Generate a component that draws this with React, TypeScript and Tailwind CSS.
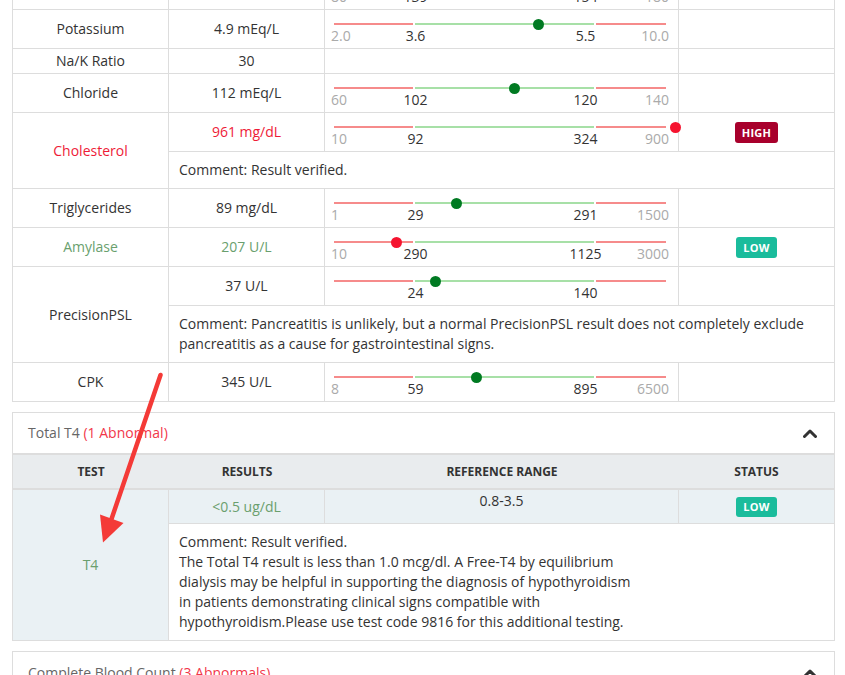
import React from "react";

type Scale = { min?: string; low: string; high: string; max?: string; dot?: number; red?: boolean };
type Row = {
  name: string;
  value: string;
  tone?: "red" | "green";
  scale?: Scale;
  status?: "HIGH" | "LOW";
  comment?: string[];
  short?: boolean;
};

const rows: Row[] = [
  { name: "Sodium", value: "146 mEq/L", scale: { min: "80", low: "139", high: "154", max: "180" } },
  { name: "Potassium", value: "4.9 mEq/L", scale: { min: "2.0", low: "3.6", high: "5.5", max: "10.0", dot: 208 } },
  { name: "Na/K Ratio", value: "30", short: true },
  { name: "Chloride", value: "112 mEq/L", scale: { min: "60", low: "102", high: "120", max: "140", dot: 184 } },
  {
    name: "Cholesterol",
    value: "961 mg/dL",
    tone: "red",
    scale: { min: "10", low: "92", high: "324", max: "900", dot: 345, red: true },
    status: "HIGH",
    comment: ["Comment: Result verified."],
  },
  { name: "Triglycerides", value: "89 mg/dL", scale: { min: "1", low: "29", high: "291", max: "1500", dot: 126 } },
  {
    name: "Amylase",
    value: "207 U/L",
    tone: "green",
    scale: { min: "10", low: "290", high: "1125", max: "3000", dot: 65.5, red: true },
    status: "LOW",
  },
  {
    name: "PrecisionPSL",
    value: "37 U/L",
    scale: { low: "24", high: "140", dot: 104.5 },
    comment: [
      "Comment: Pancreatitis is unlikely, but a normal PrecisionPSL result does not completely exclude",
      "pancreatitis as a cause for gastrointestinal signs.",
    ],
  },
  { name: "CPK", value: "345 U/L", scale: { min: "8", low: "59", high: "895", max: "6500", dot: 146 } },
];

const cell = "bg-white flex items-center justify-center text-center";

function Badge({ kind }: { kind: "HIGH" | "LOW" }) {
  return (
    <span
      className={`inline-flex h-[21px] items-center rounded-[3px] px-[7px] text-[11px] font-bold leading-none tracking-[0.3px] text-white ${
        kind === "HIGH" ? "bg-[#a8002c]" : "bg-[#1abc9c]"
      }`}
    >
      {kind}
    </span>
  );
}

function ScaleBar({ s }: { s: Scale }) {
  return (
    <div className="relative h-[38px] bg-white pl-[9px] pt-[13px]">
      <div className="flex gap-[2px]">
        <div className="h-[2px] w-[79px] bg-[#f68b8b]" />
        <div className="h-[2px] w-[179px] bg-[#a7e0a7]" />
        <div className="h-[2px] w-[70px] bg-[#f68b8b]" />
      </div>
      <div className="relative mt-[1px] h-[20px] whitespace-nowrap text-[14px] leading-[20px] text-[#333]">
        {s.min && <span className="absolute left-[-3px] top-0 text-[#aaaaaa]">{s.min}</span>}
        <span className="absolute left-[81.5px] top-0 -translate-x-1/2">{s.low}</span>
        <span className="absolute left-[251.5px] top-0 -translate-x-1/2">{s.high}</span>
        {s.max && <span className="absolute right-[9px] top-0 text-[#aaaaaa]">{s.max}</span>}
      </div>
      {s.dot !== undefined && (
        <span
          className={`absolute top-[9px] z-10 h-[11px] w-[11px] rounded-full ${s.red ? "bg-[#f5132f]" : "bg-[#007a22]"}`}
          style={{ left: s.dot }}
        />
      )}
    </div>
  );
}

function TestRow({ r }: { r: Row }) {
  const color = r.tone === "red" ? "text-[#ee1b37]" : r.tone === "green" ? "text-[#6a9f6e]" : "text-[#333]";
  return (
    <>
      <div className={`${cell} ${color} ${r.comment ? "row-span-2" : ""}`}>{r.name}</div>
      <div className={`${cell} ${color} ${r.short ? "h-[24px]" : "h-[38px]"}`}>{r.value}</div>
      {r.scale ? <ScaleBar s={r.scale} /> : <div className="bg-white" />}
      <div className={cell}>{r.status && <Badge kind={r.status} />}</div>
      {r.comment && (
        <div className="col-span-3 whitespace-nowrap bg-white px-[10px] py-[8px] text-left text-[14px] leading-[20px] text-[#333]">
          {r.comment.map((c, i) => (
            <div key={i}>{c}</div>
          ))}
        </div>
      )}
    </>
  );
}

function Chevron() {
  return (
    <svg width="14" height="9" viewBox="0 0 14 9" className="block">
      <polyline points="1.5,7.5 7,2 12.5,7.5" fill="none" stroke="#333" strokeWidth="3" strokeLinecap="round" strokeLinejoin="round" />
    </svg>
  );
}

export default function App() {
  const t4Comment = [
    "Comment: Result verified.",
    "The Total T4 result is less than 1.0 mcg/dl. A Free-T4 by equilibrium",
    "dialysis may be helpful in supporting the diagnosis of hypothyroidism",
    "in patients demonstrating clinical signs compatible with",
    "hypothyroidism.Please use test code 9816 for this additional testing.",
  ];
  return (
    <div className="relative h-[675px] w-[845px] overflow-hidden bg-white font-['Open_Sans',sans-serif] text-[14px] leading-[20px] text-[#333]">
      <div className="ml-[12px] mt-[-30px] grid w-[823px] grid-cols-[155px_155px_353px_155px] gap-px bg-[#dddddd] p-px">
        {rows.map((r) => (
          <TestRow key={r.name} r={r} />
        ))}
      </div>

      <div className="ml-[12px] mt-[10px] w-[823px] border border-[#dddddd]">
        <div className="flex h-[42px] items-center justify-between border-b-2 border-[#dddddd] pl-[15px] pr-[17px]">
          <span className="text-[#666]">
            Total T4 <span className="text-[#f2374a]">(1 Abnormal)</span>
          </span>
          <Chevron />
        </div>
        <div className="grid h-[35px] grid-cols-[156px_156px_354px_155px] items-center border-b-2 border-[#dddddd] bg-[#e9ecee] text-center text-[12px] font-bold text-[#333]">
          <span>TEST</span>
          <span>RESULTS</span>
          <span>REFERENCE RANGE</span>
          <span>STATUS</span>
        </div>
        <div className="grid grid-cols-[155px_155px_353px_155px] gap-px bg-[#dddddd]">
          <div className="row-span-2 flex items-center justify-center bg-[#eaf1f4] text-[#6a9f6e]">T4</div>
          <div className="flex h-[33px] items-center justify-center bg-[#eaf1f4] text-[#6a9f6e]">&lt;0.5 ug/dL</div>
          <div className="bg-[#eaf1f4] pt-[1px] text-center">0.8-3.5</div>
          <div className="flex items-center justify-center bg-[#eaf1f4]">
            <span className="inline-flex h-[20px] items-center rounded-[3px] bg-[#1abc9c] px-[7px] text-[11px] font-bold leading-none tracking-[0.3px] text-white">
              LOW
            </span>
          </div>
          <div className="col-span-3 whitespace-nowrap bg-white px-[10px] py-[8px] text-[14px] leading-[20px] text-[#333]">
            {t4Comment.map((c, i) => (
              <div key={i}>{c}</div>
            ))}
          </div>
        </div>
      </div>

      <div className="ml-[12px] mt-[10px] w-[823px] border border-[#dddddd]">
        <div className="flex h-[42px] items-center justify-between pl-[15px] pr-[17px]">
          <span className="text-[#666]">
            Complete Blood Count <span className="text-[#f2374a]">(3 Abnormals)</span>
          </span>
          <Chevron />
        </div>
      </div>

      <svg className="pointer-events-none absolute left-0 top-0" width="845" height="675" viewBox="0 0 845 675">
        <line x1="160.5" y1="375" x2="111.5" y2="519" stroke="#f43a37" strokeWidth="4.5" strokeLinecap="round" />
        <polygon points="100,514.5 123.5,523 103,542.5" fill="#f43a37" />
      </svg>
    </div>
  );
}
